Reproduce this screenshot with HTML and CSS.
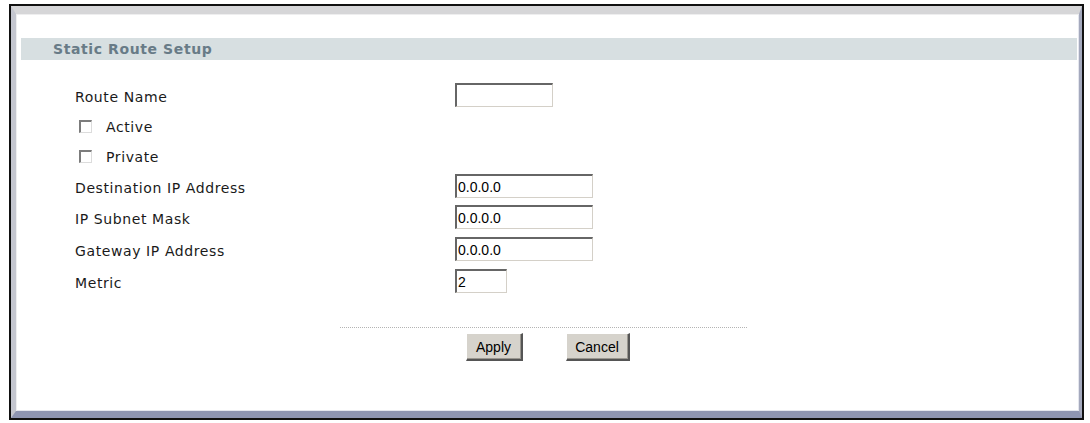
FILE: index.html
```html
<!DOCTYPE html>
<html>
<head>
<meta charset="utf-8">
<link rel="stylesheet" href="styles.css">
</head>
<body>
<div class="frame">
  <div class="panel">
    <div class="title">Static Route Setup</div>
    <div class="form">
      <div class="row r-route"><span class="lbl">Route Name</span><input class="txt w-name" type="text" value=""></div>
      <div class="row r-check"><label class="chk"><input type="checkbox" class="box"><span>Active</span></label></div>
      <div class="row r-check"><label class="chk"><input type="checkbox" class="box"><span>Private</span></label></div>
      <div class="row r-dest"><span class="lbl">Destination IP Address</span><input class="txt w-ip" type="text" value="0.0.0.0"></div>
      <div class="row r-in"><span class="lbl">IP Subnet Mask</span><input class="txt w-ip" type="text" value="0.0.0.0"></div>
      <div class="row r-in"><span class="lbl">Gateway IP Address</span><input class="txt w-ip" type="text" value="0.0.0.0"></div>
      <div class="row r-in"><span class="lbl">Metric</span><input class="txt w-metric" type="text" value="2"></div>
    </div>
    <div class="sep"></div>
    <div class="buttons">
      <button class="btn b-apply" type="button">Apply</button>
      <button class="btn b-cancel" type="button">Cancel</button>
    </div>
  </div>
</div>
</body>
</html>
```

FILE: styles.css
```css
html, body {
  margin: 0;
  padding: 0;
  background: #ffffff;
}

.frame {
  box-sizing: border-box;
  margin: 4px 0 0 9px;
  width: 1075px;
  height: 416px;
  border: 2px solid #111111;
}

.panel {
  box-sizing: border-box;
  height: 100%;
  background: #ffffff;
  border-top: 8px solid #d6d6d8;
  border-left: 5px solid #c4c6cf;
  border-right: 3px solid #a4a9bd;
  border-bottom: 7px solid #8e95b2;
  box-shadow: inset 1px 1px 0 #eeeeef, inset -1px -1px 0 #e4e6ee;
  display: flex;
  flex-direction: column;
}

.title {
  margin: 24px 2px 0 5px;
  height: 22px;
  line-height: 22px;
  padding-left: 32px;
  background: #d7dfe1;
  color: #687b87;
  font-family: "DejaVu Sans", Verdana, sans-serif;
  font-weight: bold;
  font-size: 14px;
  letter-spacing: 0.6px;
}

.form {
  margin-top: 19px;
  padding-left: 59px;
  display: flex;
  flex-direction: column;
}

.row {
  display: grid;
  grid-template-columns: 380px auto;
  align-items: center;
  height: 32px;
  font-family: "DejaVu Sans", Verdana, sans-serif;
  font-size: 14px;
  letter-spacing: 0.6px;
  color: #1a1a1a;
}

.row.r-check {
  height: 30px;
  display: flex;
}

.row.r-dest {
  height: 30px;
}

.lbl {
  white-space: nowrap;
  padding-top: 3px;
}

.chk {
  display: flex;
  align-items: center;
  padding-left: 4px;
  gap: 14px;
}

.chk span {
  padding-top: 2px;
}

.box {
  appearance: none;
  -webkit-appearance: none;
  box-sizing: border-box;
  margin: 0;
  width: 13px;
  height: 13px;
  background: #ffffff;
  border-top: 2px solid #7c7c7c;
  border-left: 2px solid #7c7c7c;
  border-right: 1px solid #dcdcdc;
  border-bottom: 1px solid #dcdcdc;
}

.txt {
  box-sizing: border-box;
  margin: 0;
  height: 24px;
  padding: 1px 2px 0 1px;
  background: #ffffff;
  border-top: 2px solid #666666;
  border-left: 2px solid #666666;
  border-right: 1px solid #d4d0c8;
  border-bottom: 1px solid #d4d0c8;
  font-family: "Liberation Sans", Arial, sans-serif;
  font-size: 14px;
  color: #000000;
  letter-spacing: 0;
  outline: none;
}

.w-name { width: 98px; }
.w-ip { width: 138px; }
.w-metric { width: 52px; }

.sep {
  margin: 30px 0 0 324px;
  width: 407px;
  border-top: 1px dotted #b4b4b4;
}

.buttons {
  margin-top: 5px;
  display: flex;
  justify-content: center;
  gap: 43px;
}

.btn {
  box-sizing: border-box;
  margin: 0;
  height: 28px;
  padding: 0;
  background: #d6d3cc;
  border-top: 1px solid #ffffff;
  border-left: 1px solid #ffffff;
  border-right: 2px solid #555555;
  border-bottom: 2px solid #555555;
  box-shadow: inset -1px -1px 0 #9a9790;
  font-family: "Liberation Sans", Arial, sans-serif;
  font-size: 14px;
  color: #000000;
}

.b-apply { width: 57px; }
.b-cancel { width: 64px; }
```
